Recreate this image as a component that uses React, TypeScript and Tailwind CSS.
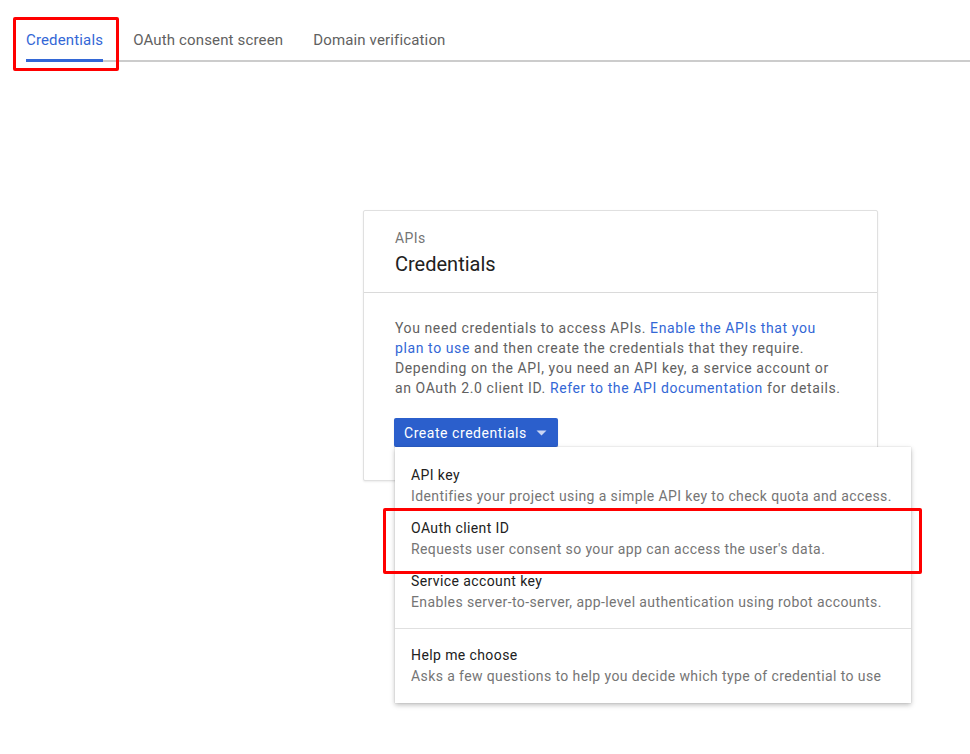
import React from "react";

const font = { fontFamily: "Roboto, 'Noto Sans', Arial, sans-serif" };

function MenuItem({ title, desc }: { title: string; desc: string }) {
  return (
    <div className="px-4 py-[6px] tracking-[0.4px]">
      <div className="text-[14px] leading-[21px] text-[#212121]">{title}</div>
      <div className="text-[14px] leading-[20px] text-[#757575] whitespace-nowrap">{desc}</div>
    </div>
  );
}

const link = "text-[#3367d6]";

export default function App() {
  return (
    <div className="relative w-[970px] h-[754px] bg-white overflow-hidden" style={font}>
      {/* Tabs */}
      <div className="pt-[30px] pl-[26px]">
        <div className="flex gap-[30px] border-b-2 border-[#cccccc] text-[15px] leading-[20px] tracking-[0.15px]">
          <div className="text-[#3367d6] pb-[7px] border-b-[3px] border-[#3367d6] -mb-[2px]">Credentials</div>
          <div className="text-[#616161] pb-[10px]">OAuth consent screen</div>
          <div className="text-[#616161] pb-[10px]">Domain verification</div>
        </div>
      </div>

      {/* Red highlight on tab */}
      <div className="absolute left-[13px] top-[17px] w-[106px] h-[54px] border-[3px] border-[#ff0000] rounded-[2px] pointer-events-none" />

      {/* Card */}
      <div className="ml-[363px] mt-[148px] w-[515px] h-[271px] relative border border-[#e0e0e0] rounded-[2px] shadow-[0_1px_2px_rgba(0,0,0,0.08)] bg-white">
        <div className="pl-[31px] pt-[18px] pb-[16px] border-b border-[#dadada]">
          <div className="text-[14px] leading-[18px] tracking-[0.4px] text-[#757575]">APIs</div>
          <div className="mt-[5px] text-[20px] leading-[24px] text-[#212121]">Credentials</div>
        </div>
        <div className="pl-[31px] pt-[25px]">
          <div className="text-[14px] leading-[20px] tracking-[0.6px] text-[#616161] whitespace-nowrap">
            <div>
              You need credentials to access APIs. <span className={link}>Enable the APIs that you</span>
            </div>
            <div>
              <span className={link}>plan to use</span> and then create the credentials that they require.
            </div>
            <div>Depending on the API, you need an API key, a service account or</div>
            <div>
              an OAuth 2.0 client ID. <span className={link}>Refer to the API documentation</span> for details.
            </div>
          </div>
          <div className="relative mt-[20px]">
            <button className="-ml-[1px] h-[29px] flex items-center gap-[9px] pl-[10px] pr-[11px] bg-[#2b5fcc] rounded-[2px] text-white text-[14px] leading-[20px] tracking-[0.55px] shadow-[0_1px_1px_rgba(0,0,0,0.2)]">
              <span>Create credentials</span>
              <svg width="11" height="6" viewBox="0 0 11 6">
                <path d="M0.5 0.5 L10.5 0.5 L5.5 5.5 Z" fill="#c9d6f3" />
              </svg>
            </button>

            {/* Dropdown menu */}
            <div className="absolute left-0 top-[29px] w-[516px] bg-white z-10 pt-[12px] pb-[11px] shadow-[0_2px_5px_rgba(0,0,0,0.26),0_0_1px_rgba(0,0,0,0.2)]">
              <MenuItem
                title="API key"
                desc="Identifies your project using a simple API key to check quota and access."
              />
              <MenuItem
                title="OAuth client ID"
                desc="Requests user consent so your app can access the user's data."
              />
              <MenuItem
                title="Service account key"
                desc="Enables server-to-server, app-level authentication using robot accounts."
              />
              <div className="mt-[10px] mb-[10px] border-t border-[#e0e0e0]" />
              <MenuItem
                title="Help me choose"
                desc="Asks a few questions to help you decide which type of credential to use"
              />
            </div>
          </div>
        </div>
      </div>

      {/* Red highlight on menu item */}
      <div className="absolute left-[383px] top-[508px] w-[539px] h-[66px] border-[3px] border-[#ff0000] rounded-[2px] z-20 pointer-events-none" />
    </div>
  );
}
